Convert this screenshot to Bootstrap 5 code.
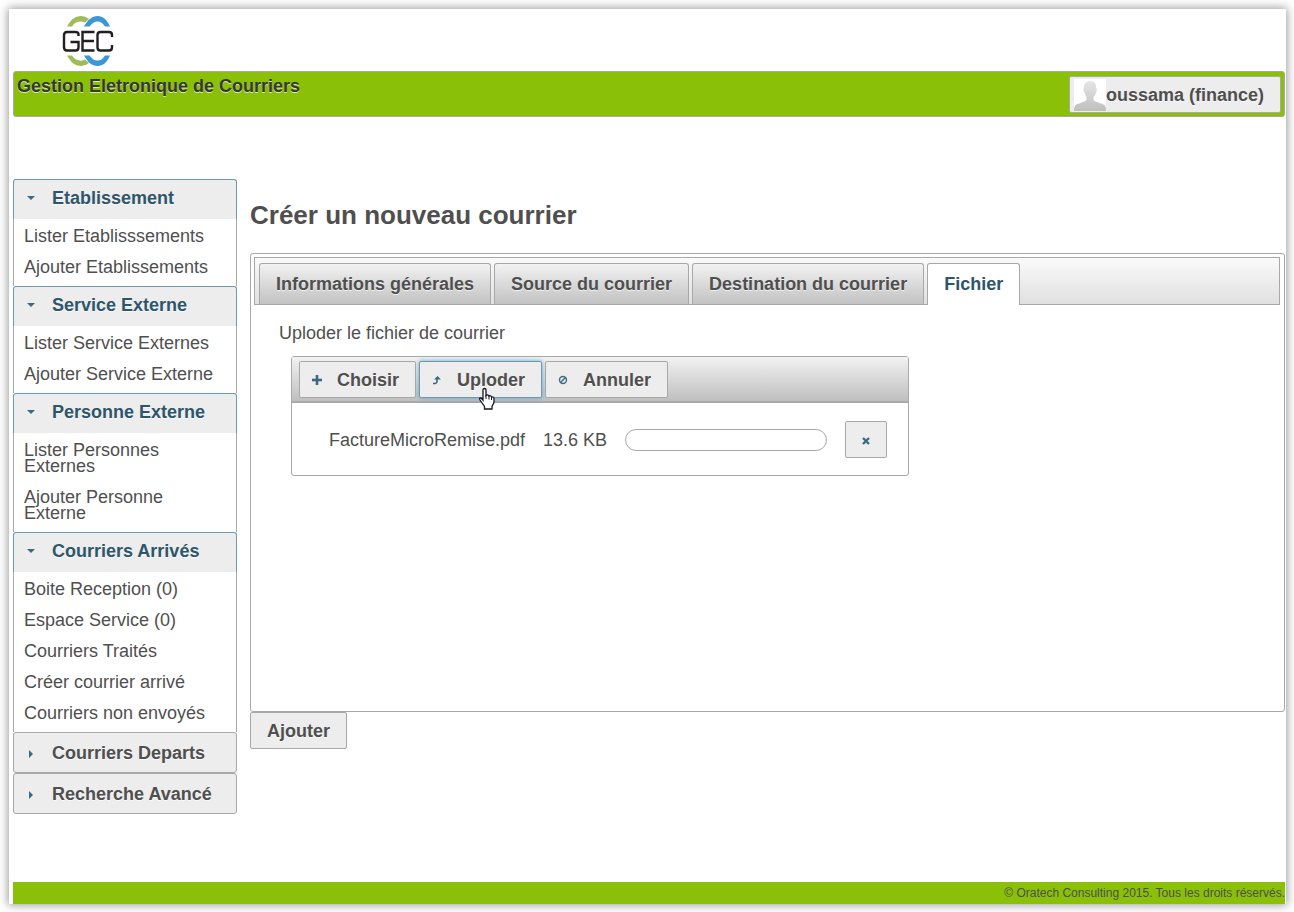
<!DOCTYPE html>
<html lang="fr">
<head>
<meta charset="utf-8">
<meta name="viewport" content="width=device-width, initial-scale=1">
<title>Gestion Eletronique de Courriers</title>
<link href="https://cdn.jsdelivr.net/npm/bootstrap@5.3.0/dist/css/bootstrap.min.css" rel="stylesheet">
<style>
  :root { --ink: #4f4f4f; --line: #a8a8a8; --accent: #2e566b; --brand: #8ac007; }
  body { font-family: "Liberation Sans", Arial, sans-serif; font-size: 18px; line-height: 20px; color: var(--ink); background: #fff; }
  .page-sheet { margin: 9px 8px 8px 9px; padding: 0 1px 0 4px; min-height: calc(100vh - 17px); background: #fff; box-shadow: 0 0 9px 1px #999; }
  .logo-row { height: 62px; padding-left: 48px; }
  .brand-bar { background: var(--brand); border: 1px solid var(--line); border-radius: 3px; height: 46px; padding: 4px 3px; }
  .brand-title { font-size: 18px; line-height: 20px; color: #363636; text-shadow: 0 1px 0 rgba(255,255,255,.7); margin: 0; }
  .ui-btn { --bs-btn-padding-x: 16px; --bs-btn-padding-y: 0; --bs-btn-font-size: 18px; --bs-btn-font-weight: 700; --bs-btn-line-height: 20px;
    --bs-btn-color: var(--ink); --bs-btn-bg: #ededed; --bs-btn-border-color: var(--line); --bs-btn-border-radius: 2px;
    --bs-btn-hover-color: var(--ink); --bs-btn-hover-bg: #ededed; --bs-btn-hover-border-color: #6c9ab3;
    height: 37px; text-shadow: 0 1px 0 rgba(255,255,255,.7); }
  .user-btn { padding: 0 16px 0 4px; }
  .body-row { gap: 13px; }
  .side-nav { width: 224px; margin-top: 62px; }
  .menu-head { height: 40px; padding: 0 12px 3px; gap: 14px; font-size: 18px; font-weight: 700; color: var(--ink); background: #ededed; border: 1px solid var(--line);
    border-radius: 3px; text-shadow: 0 1px 0 rgba(255,255,255,.7); }
  .menu-shut { height: 41px; padding-bottom: 0; }
  .menu-open { color: var(--accent); border-color: #6c9ab3; border-bottom: 0; border-radius: 3px 3px 0 0; }
  .menu-items { border: solid var(--line); border-width: 0 1px; padding: 2px 16px 3px 10px; }
  .menu-items a { display: block; padding: 7px 0 8px; line-height: 16px; color: var(--ink); text-decoration: none; }
  .main-area { margin-top: 83px; }
  .page-title { font-size: 26px; line-height: 30px; margin: 0 0 23px; font-weight: 700; }
  .tab-panel { border: 1px solid var(--line); border-radius: 3px; min-height: 459px; padding: 3px 4px 3px 3px; }
  .tab-strip { border: 1px solid var(--line); background: linear-gradient(#fafafa, #e0e0e0); padding: 5px 4px 0; gap: 3px; height: 48px; }
  .tab-btn { height: 41px; padding: 0 16px; border: 1px solid var(--line); border-bottom: 0; border-radius: 3px 3px 0 0; font-weight: 700; color: var(--ink);
    background: linear-gradient(#f2f2f2, #c2c2c2); text-shadow: 0 1px 0 rgba(255,255,255,.7); }
  .tab-btn.active { background: #fff; color: var(--accent); height: 42px; padding-bottom: 2px; }
  .tab-body { padding: 18px 25px; }
  .upload-box { width: 618px; max-width: 100%; margin: 13px 0 0 12px; border: 1px solid var(--line); border-radius: 3px; }
  .upload-bar { height: 46px; padding: 4px 7px; gap: 3px; background: linear-gradient(#f2f2f2, #bfbfbf); border-bottom: 2px solid var(--line); }
  .tool-btn { display: flex; align-items: center; gap: 15px; padding: 0 16px 0 12px; }
  .tool-hot { border-color: #6c9ab3; box-shadow: 0 0 5px #6aa6c9; position: relative; }
  .hand-cursor { position: absolute; left: 58px; top: 25px; pointer-events: none; }
  .file-row { padding: 18px 20px 17px 37px; }
  .file-row td { padding: 0 18px 0 0; white-space: nowrap; }
  .file-row td:last-child { padding-right: 0; }
  .load-bar { width: 202px; height: 22px; background: #fff; border: 1px solid var(--line); border-radius: 11px; }
  .square-btn { width: 42px; padding: 0; }
  .foot-bar { background: var(--brand); height: 22px; line-height: 22px; font-size: 12px; }
</style>
</head>
<body>
<div class="page-sheet d-flex flex-column">
  <header>
    <div class="logo-row">
      <svg width="54" height="62" viewBox="0 0 54 62" role="img" aria-label="GEC">
        <g fill="#a0bc59">
          <path d="M6 17.500C10 10.500 14 7 20 7Q24.500 7 28 10L24 13.500Q21.500 12 19 12.500C15 13 13 14.500 11 17.500Z"/>
          <path d="M6 46.500C10 53.500 14 57 20 57Q24.500 57 28 54L24 50.500Q21.500 52 19 51.500C15 51 13 49.500 11 46.500Z"/>
        </g>
        <g fill="#3c97d6">
          <path d="M23 17.500C27 10.500 31 7 36.500 7C42 7 46 10.500 49 17.500H44C42 14.500 40 12.500 36.500 12.500S31 14.500 28.500 17.500Z"/>
          <path d="M23 46.500C27 53.500 31 57 36.500 57C42 57 46 53.500 49 46.500H44C42 49.500 40 51.500 36.500 51.500S31 49.500 28.500 46.500Z"/>
        </g>
        <g fill="none" stroke="#221e22" stroke-width="2.400">
          <path d="M17.500 27V25.500Q17.500 23 14.500 23H6Q3 23 3 26.500V38Q3 41.500 6 41.500H14.500Q17.500 41.500 17.500 38.500V33H9.500"/>
          <path d="M33.500 23H21.500V41.500H33.500M21.500 32H33"/>
          <path d="M51 28V26Q51 23 48 23H39.500Q36.500 23 36.500 26V38.500Q36.500 41.500 39.500 41.500H48Q51 41.500 51 38.500V36"/>
        </g>
      </svg>
    </div>
    <div class="brand-bar d-flex justify-content-between align-items-start">
      <h1 class="brand-title fw-bold">Gestion Eletronique de Courriers</h1>
      <button type="button" class="btn ui-btn user-btn d-flex align-items-center">
        <svg width="32" height="32" viewBox="0 0 32 32" aria-hidden="true">
          <defs><linearGradient id="skin" x2="0" y2="1"><stop stop-color="#e6e6e6"/><stop offset="1" stop-color="#bebebe"/></linearGradient></defs>
          <path fill="#fff" d="M0 0h32v32H0z"/>
          <path fill="url(#skin)" d="M16 2C12 2 10 4.500 10 8.500C9 9 9.500 13 10.500 13.500C11 16 12 17 12.500 18V21C11 23 3 24.500 1 26.500Q0 28 0 32H32Q32 28 31 26.500C29 24.500 21 23 19.500 21V18C20.500 17 21.500 16 22 13.500C23 13 23 9 22 8.500C22.500 4.500 20 2 16 2Z"/>
        </svg>
        <span>oussama (finance)</span>
      </button>
    </div>
  </header>

  <div class="body-row d-flex flex-grow-1">
    <nav class="side-nav flex-shrink-0" aria-label="Menu principal">
      <button type="button" class="menu-head menu-open w-100 d-flex align-items-center" aria-expanded="true"><svg width="12" height="12" aria-hidden="true"><path d="M1 4h8L5 8z" fill="#3b6a81"/></svg>Etablissement</button>
      <div class="menu-items"><a href="#">Lister Etablisssements</a><a href="#">Ajouter Etablissements</a></div>
      <button type="button" class="menu-head menu-open w-100 d-flex align-items-center" aria-expanded="true"><svg width="12" height="12" aria-hidden="true"><path d="M1 4h8L5 8z" fill="#3b6a81"/></svg>Service Externe</button>
      <div class="menu-items"><a href="#">Lister Service Externes</a><a href="#">Ajouter Service Externe</a></div>
      <button type="button" class="menu-head menu-open w-100 d-flex align-items-center" aria-expanded="true"><svg width="12" height="12" aria-hidden="true"><path d="M1 4h8L5 8z" fill="#3b6a81"/></svg>Personne Externe</button>
      <div class="menu-items"><a href="#">Lister Personnes Externes</a><a href="#">Ajouter Personne Externe</a></div>
      <button type="button" class="menu-head menu-open w-100 d-flex align-items-center" aria-expanded="true"><svg width="12" height="12" aria-hidden="true"><path d="M1 4h8L5 8z" fill="#3b6a81"/></svg>Courriers Arrivés</button>
      <div class="menu-items"><a href="#">Boite Reception (0)</a><a href="#">Espace Service (0)</a><a href="#">Courriers Traités</a><a href="#">Créer courrier arrivé</a><a href="#">Courriers non envoyés</a></div>
      <button type="button" class="menu-head menu-shut w-100 d-flex align-items-center" aria-expanded="false"><svg width="12" height="12" aria-hidden="true"><path d="M3 3v8l4-4z" fill="#3b6a81"/></svg>Courriers Departs</button>
      <button type="button" class="menu-head menu-shut w-100 d-flex align-items-center" aria-expanded="false"><svg width="12" height="12" aria-hidden="true"><path d="M3 3v8l4-4z" fill="#3b6a81"/></svg>Recherche Avancé</button>
    </nav>

    <main class="main-area flex-grow-1">
      <h2 class="page-title">Créer un nouveau courrier</h2>
      <section class="tab-panel">
        <div class="tab-strip d-flex" role="tablist">
          <button type="button" class="tab-btn" role="tab">Informations générales</button>
          <button type="button" class="tab-btn" role="tab">Source du courrier</button>
          <button type="button" class="tab-btn" role="tab">Destination du courrier</button>
          <button type="button" class="tab-btn active" role="tab" aria-selected="true">Fichier</button>
        </div>
        <div class="tab-body">
          <div>Uploder le fichier de courrier</div>
          <div class="upload-box">
            <div class="upload-bar d-flex">
              <button type="button" class="btn ui-btn tool-btn"><svg width="10" height="10" aria-hidden="true"><path d="M4 0h2v4h4v2H6v4H4V6H0V4h4z" fill="#3b6a81" stroke="#3b6a81" stroke-width=".6"/></svg>Choisir</button>
              <button type="button" class="btn ui-btn tool-btn tool-hot"><svg width="10" height="10" aria-hidden="true"><path d="M1 8.500Q5 9 5 6V3" fill="none" stroke="#3b6a81" stroke-width="1.600"/><path d="M2 4.500L5.500 1L9 4.500z" fill="#3b6a81"/></svg>Uploder
                <svg class="hand-cursor" width="18" height="24" viewBox="0 0 18 24" aria-hidden="true"><path d="M5 13V3Q5 1.500 6.500 1.500T8 3V8.500Q9.500 7 11 9Q12.500 8 13.500 10Q16 9.500 16 12V15.500L14 19.500V22H6.500V19.500L2 13Q1 11 2.500 11Q3.500 11 5 13Z" fill="#fff" stroke="#111727" stroke-width="1.300"/><path d="M8 8v4M11 9v3.500M13.500 10v3" fill="none" stroke="#111727"/></svg>
              </button>
              <button type="button" class="btn ui-btn tool-btn"><svg width="10" height="10" aria-hidden="true"><g fill="none" stroke="#3b6a81" stroke-width="1.400"><circle cx="5" cy="5" r="3.500"/><path d="M2.500 7.500l5-5"/></g></svg>Annuler</button>
            </div>
            <div class="file-row">
              <table>
                <tbody><tr>
                  <td>FactureMicroRemise.pdf</td>
                  <td>13.6 KB</td>
                  <td><div class="load-bar" role="progressbar" aria-label="Progression" aria-valuenow="0" aria-valuemin="0" aria-valuemax="100"></div></td>
                  <td><button type="button" class="btn ui-btn square-btn" aria-label="Retirer le fichier"><svg width="10" height="10" aria-hidden="true"><path d="M2 2l6 6M8 2L2 8" stroke="#3b6a81" stroke-width="2.400"/></svg></button></td>
                </tr></tbody>
              </table>
            </div>
          </div>
        </div>
      </section>
      <button type="button" class="btn ui-btn">Ajouter</button>
    </main>
  </div>

  <footer class="foot-bar text-end">© Oratech Consulting 2015. Tous les droits réservés.</footer>
</div>
<script src="https://cdn.jsdelivr.net/npm/bootstrap@5.3.0/dist/js/bootstrap.bundle.min.js"></script>
</body>
</html>
